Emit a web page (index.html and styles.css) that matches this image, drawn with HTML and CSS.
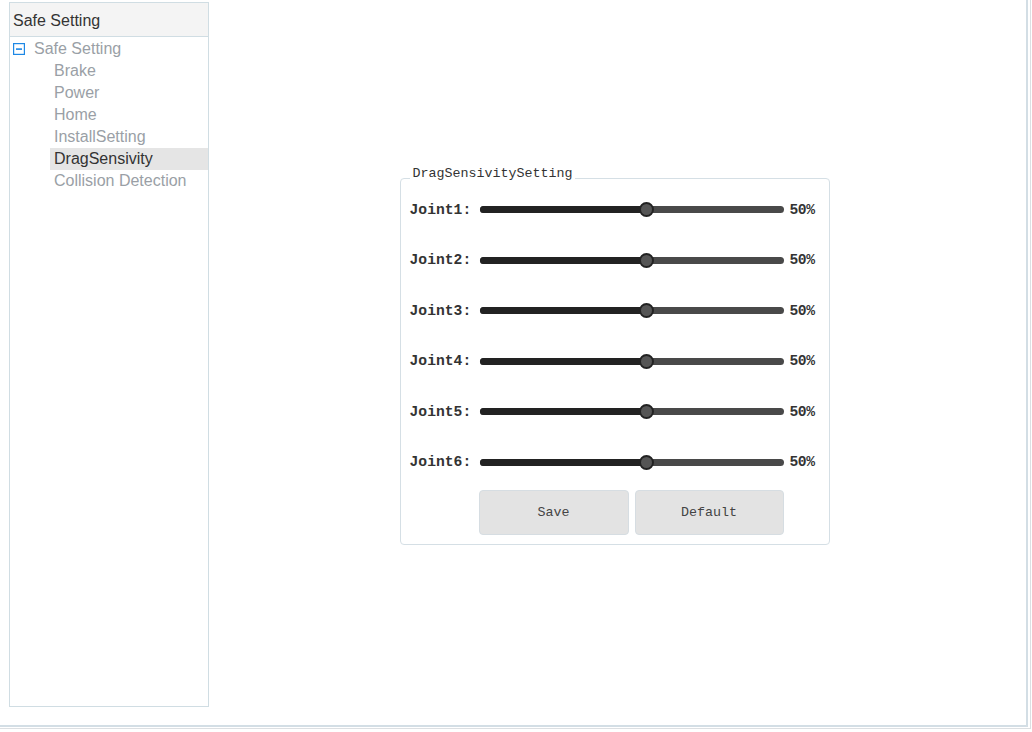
FILE: index.html
```html
<!DOCTYPE html>
<html>
<head>
<meta charset="utf-8">
<link rel="stylesheet" href="styles.css">
</head>
<body>
<div class="outer">
  <div class="frame">
    <aside class="sidebar">
      <div class="side-head">Safe Setting</div>
      <ul class="tree">
        <li class="root">
          <svg class="toggle" width="12" height="12" viewBox="0 0 12 12"><rect x="0.5" y="0.5" width="11" height="11" fill="#fff" stroke="#1e88e5" stroke-width="1.4"/><rect x="3" y="5.3" width="6" height="1.6" fill="#1e88e5"/></svg>
          <span>Safe Setting</span>
        </li>
        <li class="leaf">Brake</li>
        <li class="leaf">Power</li>
        <li class="leaf">Home</li>
        <li class="leaf">InstallSetting</li>
        <li class="leaf active">DragSensivity</li>
        <li class="leaf">Collision Detection</li>
      </ul>
    </aside>
    <main class="main">
      <fieldset class="group">
        <legend>DragSensivitySetting</legend>
        <div class="rows">
          <div class="row"><span class="label">Joint1:</span><div class="track"><div class="fill" style="width:55%"></div><div class="thumb" style="left:55%"></div></div><span class="val">50%</span></div>
          <div class="row"><span class="label">Joint2:</span><div class="track"><div class="fill" style="width:55%"></div><div class="thumb" style="left:55%"></div></div><span class="val">50%</span></div>
          <div class="row"><span class="label">Joint3:</span><div class="track"><div class="fill" style="width:55%"></div><div class="thumb" style="left:55%"></div></div><span class="val">50%</span></div>
          <div class="row"><span class="label">Joint4:</span><div class="track"><div class="fill" style="width:55%"></div><div class="thumb" style="left:55%"></div></div><span class="val">50%</span></div>
          <div class="row"><span class="label">Joint5:</span><div class="track"><div class="fill" style="width:55%"></div><div class="thumb" style="left:55%"></div></div><span class="val">50%</span></div>
          <div class="row"><span class="label">Joint6:</span><div class="track"><div class="fill" style="width:55%"></div><div class="thumb" style="left:55%"></div></div><span class="val">50%</span></div>
        </div>
        <div class="buttons">
          <button class="btn save">Save</button>
          <button class="btn default">Default</button>
        </div>
      </fieldset>
    </main>
  </div>
</div>
</body>
</html>
```
FILE: styles.css
```css
html, body {
  margin: 0;
  padding: 0;
  background: #fff;
}
body {
  font-family: "Liberation Sans", Arial, sans-serif;
}
.outer {
  width: 1031px;
  height: 729px;
  box-sizing: border-box;
  border-right: 1px solid #dcdfe2;
  border-bottom: 1px solid #dcdfe2;
}
.frame {
  width: 1028px;
  height: 727px;
  box-sizing: border-box;
  border-right: 2px solid #d3dee5;
  border-bottom: 2px solid #d3dee5;
  display: flex;
  padding: 2px 0 0 9px;
}
.sidebar {
  width: 200px;
  height: 705px;
  box-sizing: border-box;
  border: 1px solid #d0dde3;
  flex: none;
}
.side-head {
  height: 34px;
  box-sizing: border-box;
  background: #f4f4f4;
  border-bottom: 1px solid #d0dde3;
  font-size: 16px;
  color: #333;
  padding: 1px 0 0 3px;
  line-height: 33px;
}
.tree {
  list-style: none;
  margin: 0;
  padding: 1px 0 0;
}
.tree li {
  height: 22px;
  line-height: 22px;
  font-size: 16px;
  color: #9a9fa6;
  white-space: nowrap;
}
.root {
  display: flex;
  align-items: center;
  padding-left: 3px;
  gap: 9px;
}
.toggle {
  display: block;
  flex: none;
}
.leaf {
  margin-left: 40px;
  padding-left: 4px;
}
.leaf.active {
  background: #e5e5e5;
  color: #333;
}
.main {
  flex: 1;
  display: flex;
  align-items: center;
  justify-content: center;
  padding: 0 6px 15px 0;
}
.group {
  width: 430px;
  box-sizing: border-box;
  margin: 0;
  border: 1px solid #d5dfe5;
  border-radius: 4px;
  padding: 7px 12px 9px 9px;
  font-family: "Liberation Mono", "Courier New", monospace;
}
.group legend {
  padding: 0 3px 10px;
  font-size: 13.33px;
  line-height: 14px;
  color: #333;
}
.rows {
  display: flex;
  flex-direction: column;
  gap: 26.6px;
}
.row {
  height: 24px;
  display: flex;
  align-items: center;
}
.label {
  width: 70px;
  flex: none;
  font-weight: bold;
  font-size: 14.7px;
  color: #333;
}
.track {
  position: relative;
  width: 304px;
  height: 7px;
  border-radius: 4px;
  background: #494949;
  flex: none;
}
.fill {
  height: 100%;
  background: #222;
  border-radius: 4px 0 0 4px;
}
.thumb {
  position: absolute;
  top: 50%;
  width: 11px;
  height: 11px;
  margin: -7.5px 0 0 -7.5px;
  border-radius: 50%;
  background: #555;
  border: 2px solid #222;
}
.val {
  margin-left: 6px;
  font-weight: bold;
  font-size: 14.7px;
  color: #333;
  letter-spacing: -0.5px;
}
.buttons {
  display: flex;
  gap: 6px;
  margin: 16px 0 0 69px;
}
.btn {
  width: 150px;
  height: 45px;
  box-sizing: border-box;
  background: #e3e3e3;
  border: 1px solid #d6dde2;
  border-radius: 4px;
  font-family: "Liberation Mono", "Courier New", monospace;
  font-size: 13.33px;
  color: #444;
  padding: 0;
}
.btn.default {
  width: 149px;
}
```
